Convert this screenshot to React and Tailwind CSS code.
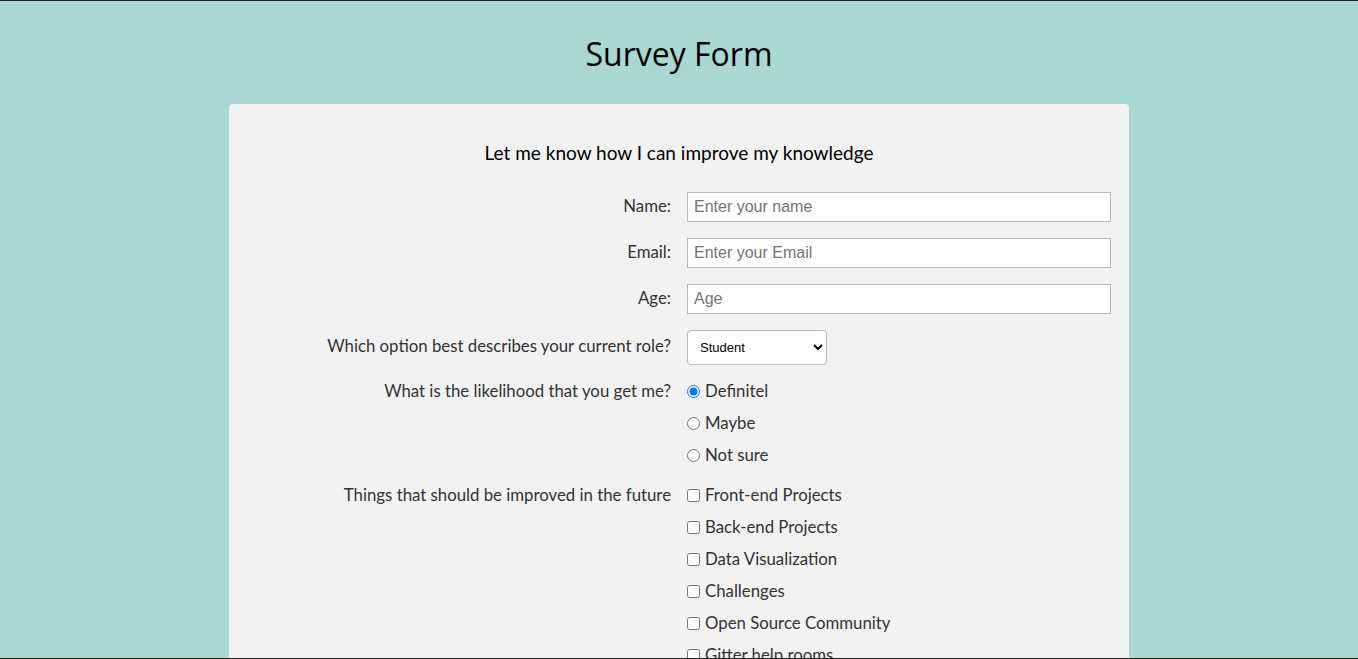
import { useState } from 'react';

const labelFont = "font-['Lato','Liberation_Sans',sans-serif]";

function Row({ label, children, className = '', align = 'items-center' }) {
  return (
    <div className={`flex ${align} gap-4 ${className}`}>
      <label className={`w-[424px] shrink-0 text-right text-[16.8px] leading-6 text-[#333] ${labelFont} ${align === 'items-center' ? 'pb-[3px]' : ''}`}>
        {label}
      </label>
      <div className="flex-1">{children}</div>
    </div>
  );
}

export default function App() {
  const [likelihood, setLikelihood] = useState('definitely');
  const [role, setRole] = useState('student');

  const improvements = [
    'Front-end Projects',
    'Back-end Projects',
    'Data Visualization',
    'Challenges',
    'Open Source Community',
    'Gitter help rooms',
    'Videos',
    'City Meetups',
  ];

  return (
    <div className="h-screen overflow-hidden border-y border-[#222] bg-[#a9d7d2]">
      <h1 className="pt-[29px] text-center text-[32px] leading-[48px] text-black font-['Open_Sans','Noto_Sans',sans-serif]">
        Survey Form
      </h1>

      <form className="mx-auto mt-[26px] w-[900px] rounded bg-[#f2f2f2] px-[18px] pt-[35px] pb-10">
        <p className={`mb-[25px] text-center text-[19px] leading-7 text-black ${labelFont}`}>
          Let me know how I can improve my knowledge
        </p>

        <Row label="Name:" className="mb-4">
          <input
            type="text"
            placeholder="Enter your name"
            className="block h-[30px] w-[424px] border border-[#bbb] bg-white px-[6px] text-[16px] font-['Liberation_Sans',Arial,sans-serif] placeholder:text-[#757575] outline-none"
          />
        </Row>

        <Row label="Email:" className="mb-4">
          <input
            type="email"
            placeholder="Enter your Email"
            className="block h-[30px] w-[424px] border border-[#bbb] bg-white px-[6px] text-[16px] font-['Liberation_Sans',Arial,sans-serif] placeholder:text-[#757575] outline-none"
          />
        </Row>

        <Row label="Age:" className="mb-4">
          <input
            type="number"
            placeholder="Age"
            className="block h-[30px] w-[424px] border border-[#bbb] bg-white px-[6px] text-[16px] font-['Liberation_Sans',Arial,sans-serif] placeholder:text-[#757575] outline-none"
          />
        </Row>

        <Row label="Which option best describes your current role?" className="mb-[14px]">
          <select
            value={role}
            onChange={(e) => setRole(e.target.value)}
            className="block h-[35px] w-[140px] rounded-sm border border-[#bbb] bg-white px-2 text-[13px] text-black font-['Liberation_Sans',Arial,sans-serif]"
          >
            <option value="student">Student</option>
            <option value="fulltime">Full Time Job</option>
            <option value="learner">Full Time Learner</option>
            <option value="other">Other</option>
          </select>
        </Row>

        <Row label="What is the likelihood that you get me?" className="mb-4" align="items-start">
          <div className="flex flex-col gap-2">
            {[
              ['definitely', 'Definitel'],
              ['maybe', 'Maybe'],
              ['notsure', 'Not sure'],
            ].map(([value, text]) => (
              <label key={value} className={`flex h-6 items-center text-[16.8px] text-[#333] ${labelFont}`}>
                <input
                  type="radio"
                  name="likelihood"
                  checked={likelihood === value}
                  onChange={() => setLikelihood(value)}
                  className="mr-[5px] h-[13px] w-[13px] accent-[#0075ff]"
                />
                {text}
              </label>
            ))}
          </div>
        </Row>

        <Row label="Things that should be improved in the future" align="items-start">
          <div className="flex flex-col gap-2">
            {improvements.map((item) => (
              <label key={item} className={`flex h-6 items-center text-[16.8px] text-[#333] ${labelFont}`}>
                <input type="checkbox" className="mr-[5px] h-[13px] w-[13px]" />
                {item}
              </label>
            ))}
          </div>
        </Row>
      </form>
    </div>
  );
}
